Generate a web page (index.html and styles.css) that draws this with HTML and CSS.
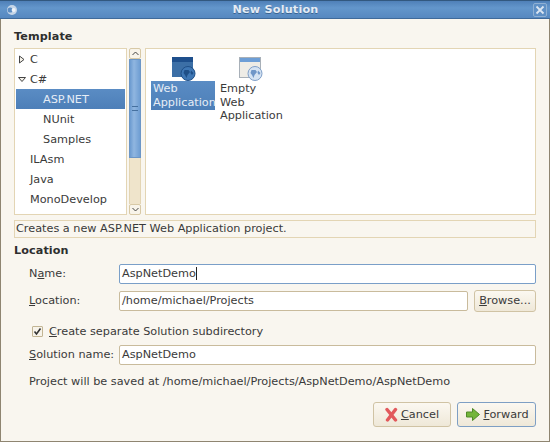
FILE: index.html
```html
<!DOCTYPE html>
<html>
<head>
<meta charset="utf-8">
<title>New Solution</title>
<link rel="stylesheet" href="styles.css">
</head>
<body>
<div class="window">
  <header class="titlebar">
    <svg class="app-icon" width="12" height="12" viewBox="0 0 12 12"><circle cx="6" cy="6" r="5" fill="#c6d6e8"/><circle cx="4.2" cy="6" r="2.6" fill="#5b8cc2"/><circle cx="7.6" cy="6" r="2" fill="#eef3f8"/></svg>
    <span class="title">New Solution</span>
    <span class="close"><svg width="10" height="10" viewBox="0 0 10 10"><path d="M1.5 1.5 8.5 8.5M8.5 1.5 1.5 8.5" stroke="#dbe6f2" stroke-width="1.8"/></svg></span>
  </header>
  <main class="content">
    <h2 class="heading">Template</h2>
    <section class="template-row">
      <ul class="tree">
        <li class="node"><svg class="arrow" width="8" height="9" viewBox="0 0 8 9"><path d="M1.5 1 6 4.500 1.500 8Z" fill="#f5f2ea" stroke="#444"/></svg><span>C</span></li>
        <li class="node"><svg class="arrow" width="8" height="9" viewBox="0 0 8 9"><path d="M0.500 2.500 7.500 2.500 4 6.500Z" fill="#f5f2ea" stroke="#444"/></svg><span>C#</span></li>
        <li class="node child selected"><span>ASP.NET</span></li>
        <li class="node child"><span>NUnit</span></li>
        <li class="node child"><span>Samples</span></li>
        <li class="node leaf"><span>ILAsm</span></li>
        <li class="node leaf"><span>Java</span></li>
        <li class="node leaf"><span>MonoDevelop</span></li>
      </ul>
      <div class="scrollbar">
        <div class="step"><svg width="7" height="5" viewBox="0 0 7 5"><path d="M0.500 4 3.500 1 6.500 4" fill="none" stroke="#444"/></svg></div>
        <div class="track">
          <div class="thumb"><span class="grip"></span></div>
        </div>
        <div class="step"><svg width="7" height="5" viewBox="0 0 7 5"><path d="M0.500 1 3.500 4 6.500 1" fill="none" stroke="#444"/></svg></div>
      </div>
      <div class="icons">
        <div class="item">
          <svg class="item-icon" width="26" height="25" viewBox="0 0 26 25">
            <rect x="2" y="1" width="21" height="20" fill="#3c6fa6"/>
            <rect x="2" y="1" width="21" height="5" fill="#1e4f8c"/>
            <circle cx="18" cy="17.500" r="7" fill="#3f77b4" stroke="#1f4f87"/>
            <path d="M14.500 14h4l1.500 2-2.500 3-1 3-1.500-3-1.500-2ZM21 14.500l2.500 2.500-1.500 2-1.500-2Z" fill="#1f4f87"/>
          </svg>
          <span class="item-label selected">Web Application</span>
        </div>
        <div class="item">
          <svg class="item-icon" width="26" height="25" viewBox="0 0 26 25">
            <rect x="2.500" y="1.500" width="21" height="20" fill="#eeece6" stroke="#a8b0b8"/>
            <rect x="3" y="2" width="20" height="4" fill="#6d9ed6"/>
            <circle cx="18" cy="17.500" r="7" fill="#d5e3f3" stroke="#7f9fc8"/>
            <path d="M14.500 14h4l1.500 2-2.500 3-1 3-1.500-3-1.500-2ZM21 14.500l2.500 2.500-1.500 2-1.500-2Z" fill="#6f96c8"/>
          </svg>
          <span class="item-label">Empty Web Application</span>
        </div>
      </div>
    </section>
    <p class="description">Creates a new ASP.NET Web Application project.</p>
    <h2 class="heading location-heading">Location</h2>
    <div class="form">
      <div class="field">
        <label class="label">N<u>a</u>me:</label>
        <div class="input focused">AspNetDemo<span class="caret"></span></div>
      </div>
      <div class="field">
        <label class="label"><u>L</u>ocation:</label>
        <div class="input">/home/michael/Projects</div>
        <button class="btn browse"><u>B</u>rowse...</button>
      </div>
      <div class="check-row">
        <span class="checkbox"><svg width="9" height="9" viewBox="0 0 9 9"><path d="M1.500 4.500 3.500 7 7.500 1.500" fill="none" stroke="#333" stroke-width="1.600"/></svg></span>
        <span><u>C</u>reate separate Solution subdirectory</span>
      </div>
      <div class="field">
        <label class="label"><u>S</u>olution name:</label>
        <div class="input">AspNetDemo</div>
      </div>
      <p class="path">Project will be saved at /home/michael/Projects/AspNetDemo/AspNetDemo</p>
    </div>
    <footer class="actions">
      <button class="btn action cancel">
        <svg width="13" height="15" viewBox="0 0 13 15"><path d="M2 2.500 10.500 13M10.500 2.500 2.500 13" stroke="#e2595c" stroke-width="3.400" stroke-linecap="round"/></svg>
        <span><u>C</u>ancel</span>
      </button>
      <button class="btn action forward">
        <svg width="14" height="13" viewBox="0 0 14 13"><path d="M0.500 4H6.500V0.500L13.500 6.500 6.500 12.500V9H0.500Z" fill="#74b53a" stroke="#4f8a28"/></svg>
        <span><u>F</u>orward</span>
      </button>
    </footer>
  </main>
</div>
</body>
</html>
```
FILE: styles.css
```css
* {
  box-sizing: border-box;
}
html, body {
  margin: 0;
  padding: 0;
}
body {
  width: 550px;
  height: 442px;
  overflow: hidden;
  font-family: "DejaVu Sans", sans-serif;
  font-size: 11.25px;
  color: #3a3a3a;
}
.window {
  width: 550px;
  height: 442px;
  display: flex;
  flex-direction: column;
  background: #f9f6ef;
  border: 1px solid #8f8571;
  border-top: 0;
}
.titlebar {
  flex: none;
  height: 19px;
  margin: 0 -1px;
  display: flex;
  align-items: center;
  position: relative;
  padding: 0 3px 0 6px;
  background: linear-gradient(#4f80b8, #6396cb 40%, #5688c0);
  border-top: 1px solid #32587f;
  border-bottom: 1px solid #3f6a9a;
  color: #e4ecf5;
  font-weight: bold;
  font-size: 11.2px;
}
.title {
  flex: 1;
  text-align: center;
  letter-spacing: 0.2px;
  text-shadow: 0 1px 0 #3a6491;
}
.close {
  width: 14px;
  height: 14px;
  display: flex;
  align-items: center;
  justify-content: center;
  border: 1px solid #8fb0d3;
  border-radius: 2px;
  background: #5f90c5;
}
.content {
  flex: 1;
  display: flex;
  flex-direction: column;
  padding: 9px 13px 0 13px;
  min-height: 0;
}
.heading {
  margin: 0;
  font-size: 11.2px;
  font-weight: bold;
  line-height: 17px;
  height: 20px;
  letter-spacing: 0.1px;
  color: #2e2e2e;
}
.template-row {
  display: flex;
  height: 167px;
}
.tree {
  list-style: none;
  margin: 0;
  padding: 0 1px;
  width: 113px;
  background: #fff;
  border: 1px solid #e3d5b4;
  overflow: hidden;
}
.node {
  height: 20px;
  display: flex;
  align-items: center;
  padding-left: 14px;
  position: relative;
}
.node .arrow {
  position: absolute;
  left: 2px;
  top: 6px;
}
.child {
  padding-left: 27px;
}
.selected {
  background: linear-gradient(#5a8cc4, #4d7fb8);
  color: #e6edf6;
}
.scrollbar {
  width: 12px;
  margin-left: 2px;
  display: flex;
  flex-direction: column;
}
.step {
  flex: none;
  height: 11px;
  display: flex;
  align-items: center;
  justify-content: center;
  background: #f8f4ea;
  border: 1px solid #d8c9a6;
  border-radius: 2px;
}
.track {
  flex: 1;
  background: #efe4cb;
  border-left: 1px solid #e3d5b4;
  border-right: 1px solid #e3d5b4;
}
.thumb {
  height: 99px;
  margin: 0 -1px;
  display: flex;
  align-items: center;
  justify-content: center;
  background: linear-gradient(90deg, #6c9bd0, #90b6e0 40%, #6f9ed3);
  border: 1px solid #6c96c6;
}
.grip {
  width: 6px;
  height: 5px;
  border-top: 1px solid #45709f;
  border-bottom: 1px solid #45709f;
}
.icons {
  flex: 1;
  margin-left: 4px;
  padding: 7px 5px;
  display: flex;
  align-items: flex-start;
  gap: 3px;
  background: #fff;
  border: 1px solid #e3d5b4;
}
.item {
  width: 64px;
  display: flex;
  flex-direction: column;
  align-items: flex-start;
}
.item-icon {
  align-self: center;
}
.item-label {
  width: 64px;
  padding: 1px 0 1px 2px;
  line-height: 13.5px;
}
.description {
  margin: 5px 0 0 0;
  height: 18px;
  line-height: 16px;
  padding-left: 1px;
  border: 1px solid #e3d5b4;
}
.location-heading {
  margin-top: 5px;
  height: 17px;
  line-height: 15px;
}
.form {
  padding-left: 15px;
}
.field {
  display: flex;
  align-items: center;
  height: 27px;
}
.label {
  width: 90px;
  flex: none;
  white-space: nowrap;
}
.input {
  flex: 1;
  height: 20px;
  line-height: 18px;
  padding-left: 2px;
  background: #fff;
  border: 1px solid #c9bb9c;
  border-radius: 2px;
  display: flex;
  align-items: center;
}
.focused {
  border-color: #7a9fc8;
}
.caret {
  width: 1px;
  height: 13px;
  background: #222;
}
.btn {
  font: inherit;
  color: inherit;
  background: linear-gradient(#fbf8f1, #efe8d8);
  border: 1px solid #d0c3a4;
  border-radius: 3px;
  padding: 0;
}
.browse {
  width: 62px;
  height: 22px;
  margin-left: 6px;
}
.check-row {
  display: flex;
  align-items: center;
  gap: 6px;
  height: 20px;
  margin: 7px 0 0 3px;
}
.checkbox {
  width: 11px;
  height: 11px;
  display: flex;
  align-items: center;
  justify-content: center;
  background: #f7f3ea;
  border: 1px solid #c2b594;
  border-radius: 1px;
}
.path {
  margin: 6px 0 0;
  line-height: 16px;
}
.actions {
  display: flex;
  justify-content: flex-end;
  gap: 6px;
  margin-top: 12px;
}
.action {
  height: 25px;
  display: flex;
  align-items: center;
  justify-content: center;
  gap: 3px;
}
.cancel {
  width: 78px;
}
.forward {
  width: 79px;
  gap: 3px;
  padding-left: 2px;
  border: 1px solid #7e9fc4;
}
```
